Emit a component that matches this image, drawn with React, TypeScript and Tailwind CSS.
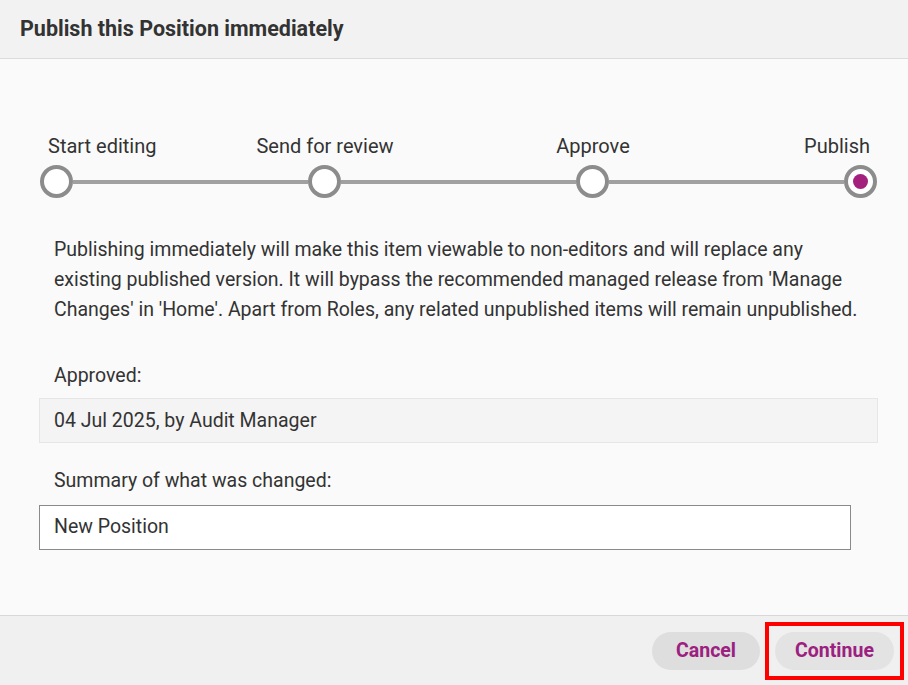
const font = { fontFamily: "Roboto, 'Noto Sans', sans-serif" };

const Circle = ({ active }: { active?: boolean }) => (
  <div className="w-[33px] h-[33px] shrink-0 rounded-full border-[4px] border-[#8c8c8c] bg-white flex items-center justify-center">
    {active && <div className="w-[15px] h-[15px] rounded-full bg-[#a3217d]" />}
  </div>
);

const Line = () => <div className="flex-1 h-[4px] bg-[#a0a0a0]" />;

export default function App() {
  return (
    <div style={font} className="w-[908px] h-[685px] bg-[#fafafa] flex flex-col text-[#333]">
      <div className="h-[59px] bg-[#f2f2f2] border-b border-[#dcdcdc] px-[20px] flex items-center">
        <h1 className="text-[21.5px] font-bold text-[#333]">Publish this Position immediately</h1>
      </div>

      <div className="flex-1 pl-[39px] pr-[30px] pt-[72px]">
        <div className="relative h-[28px] text-[20px] text-[#333]">
          <span className="absolute left-[9px] top-0">Start editing</span>
          <span className="absolute left-[286px] -translate-x-1/2 top-0">Send for review</span>
          <span className="absolute left-[554px] -translate-x-1/2 top-0">Approve</span>
          <span className="absolute right-[8px] top-0">Publish</span>
        </div>
        <div className="flex items-center mx-[1px] mt-[6px]">
          <Circle />
          <Line />
          <Circle />
          <Line />
          <Circle />
          <Line />
          <Circle active />
        </div>

        <p className="pl-[15px] pr-[4px] mt-[37px] text-[19.5px] leading-[30px] text-[#333]">
          Publishing immediately will make this item viewable to non-editors and will replace any existing published version. It will bypass the recommended managed release from 'Manage Changes' in 'Home'. Apart from Roles, any related unpublished items will remain unpublished.
        </p>

        <div className="px-[15px] mt-[36px] text-[19.5px]">Approved:</div>
        <div className="mt-[8px] h-[45px] bg-[#f4f4f4] border border-[#e6e6e6] px-[14px] flex items-center text-[19.5px]">
          04 Jul 2025, by Audit Manager
        </div>

        <div className="px-[15px] mt-[23px] text-[19.5px]">Summary of what was changed:</div>
        <div className="mt-[9px] mr-[27px] h-[45px] bg-white border border-[#8a8a8a] px-[14px] flex items-center text-[19.5px]">
          New Position
        </div>
      </div>

      <div className="h-[70px] bg-[#f0f0f0] border-t border-[#d8d8d8] flex items-center justify-end pr-[4px] gap-[5px]">
        <button className="h-[38px] w-[108px] rounded-full bg-[#dedede] text-[#9c2080] text-[19.5px] font-bold">Cancel</button>
        <div className="border-[4px] border-[#ff0000] p-[6px]">
          <button className="h-[38px] w-[119px] rounded-full bg-[#e3e3e3] text-[#9c2080] text-[19.5px] font-bold">Continue</button>
        </div>
      </div>
    </div>
  );
}
